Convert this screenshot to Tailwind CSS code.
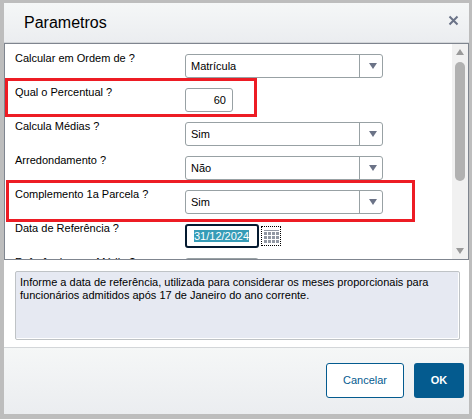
<!DOCTYPE html>
<html lang="pt-BR">
<head>
  <meta charset="UTF-8" />
  <meta name="viewport" content="width=device-width, initial-scale=1.0"/>
  <title>Parametros</title>
  <script src="https://cdn.jsdelivr.net/npm/@tailwindcss/browser@4"></script>
</head>
<body class="min-h-screen bg-[#bdbdbd] pt-[3px] pr-[3px] pb-[5px] pl-1 font-['Liberation_Sans',Arial,sans-serif] text-[11px] text-black">

  <main role="dialog" aria-labelledby="title" class="bg-white">

    <header class="flex h-10 items-center justify-between border-b border-[#d3d6d9] bg-linear-to-b from-[#f5f7f7] to-[#ebedf0] pr-[10px] pl-5">
      <h1 id="title" class="text-base">Parametros</h1>
      <button type="button" aria-label="Fechar" class="pb-1">
        <svg class="size-[11px]" viewBox="0 0 11 11" fill="none" stroke="#6b7387" stroke-width="2"><path d="M1.5 1.5l8 8M9.5 1.5l-8 8"/></svg>
      </button>
    </header>

    <!-- Parameter list -->
    <section class="relative flex h-[217px] overflow-hidden border border-[#7f858f]">
      <form id="params" class="flex flex-1 flex-col gap-[10px] pt-[10px] pl-[10px]">
        <div class="flex h-6 shrink-0">
          <label for="ordem" class="w-[170px] leading-2">Calcular em Ordem de ?</label>
          <div class="relative">
            <select id="ordem" class="h-6 w-[198px] appearance-none rounded-[3px] border border-[#98a1a4] bg-white pl-[5px]"><option>Matrícula</option></select>
            <span class="pointer-events-none absolute inset-y-0 right-0 flex w-6 items-center justify-center border-l border-[#98a1a4] pl-[3px]">
              <svg class="h-[6px] w-2" viewBox="0 0 8 6" fill="#6b7387"><path d="M0 0h8L4 6z"/></svg>
            </span>
          </div>
        </div>
        <div class="flex h-6 shrink-0">
          <label for="percentual" class="w-[170px] leading-2">Qual o Percentual ?</label>
          <input id="percentual" type="text" value="60" class="h-6 w-12 rounded-[3px] border border-[#98a1a4] px-[6px] text-right">
        </div>
        <div class="flex h-6 shrink-0">
          <label for="medias" class="w-[170px] leading-2">Calcula Médias ?</label>
          <div class="relative">
            <select id="medias" class="h-6 w-[198px] appearance-none rounded-[3px] border border-[#98a1a4] bg-white pl-[5px]"><option>Sim</option><option>Não</option></select>
            <span class="pointer-events-none absolute inset-y-0 right-0 flex w-6 items-center justify-center border-l border-[#98a1a4] pl-[3px]">
              <svg class="h-[6px] w-2" viewBox="0 0 8 6" fill="#6b7387"><path d="M0 0h8L4 6z"/></svg>
            </span>
          </div>
        </div>
        <div class="flex h-6 shrink-0">
          <label for="arredondamento" class="w-[170px] leading-2">Arredondamento ?</label>
          <div class="relative">
            <select id="arredondamento" class="h-6 w-[198px] appearance-none rounded-[3px] border border-[#98a1a4] bg-white pl-[5px]"><option>Não</option><option>Sim</option></select>
            <span class="pointer-events-none absolute inset-y-0 right-0 flex w-6 items-center justify-center border-l border-[#98a1a4] pl-[3px]">
              <svg class="h-[6px] w-2" viewBox="0 0 8 6" fill="#6b7387"><path d="M0 0h8L4 6z"/></svg>
            </span>
          </div>
        </div>
        <div class="flex h-6 shrink-0">
          <label for="complemento" class="w-[170px] leading-2">Complemento 1a Parcela ?</label>
          <div class="relative">
            <select id="complemento" class="h-6 w-[198px] appearance-none rounded-[3px] border border-[#98a1a4] bg-white pl-[5px]"><option>Sim</option><option>Não</option></select>
            <span class="pointer-events-none absolute inset-y-0 right-0 flex w-6 items-center justify-center border-l border-[#98a1a4] pl-[3px]">
              <svg class="h-[6px] w-2" viewBox="0 0 8 6" fill="#6b7387"><path d="M0 0h8L4 6z"/></svg>
            </span>
          </div>
        </div>
        <div class="flex h-6 shrink-0">
          <label for="data" class="w-[170px] leading-2">Data de Referência ?</label>
          <input id="data" type="text" value="31/12/2024" class="h-6 w-[74px] rounded-[3px] border-2 border-[#041a30] pl-[7px] outline-none selection:bg-[#369cb7] selection:text-white">
          <button type="button" aria-label="Calendário" class="ml-[2px] flex size-5 items-center justify-center self-center border border-dotted border-black">
            <svg class="h-[13px] w-[15px]" viewBox="0 0 15 13" fill="#9298a3" shape-rendering="crispEdges"><path d="M0 0h15v1H0zM0 2h3v3H0zM4 2h3v3H4zM8 2h3v3H8zM12 2h3v3h-3zM0 6h3v3H0zM4 6h3v3H4zM8 6h3v3H8zM12 6h3v3h-3zM0 10h3v3H0zM4 10h3v3H4zM8 10h3v3H8zM12 10h3v3h-3z"/></svg>
          </button>
        </div>
        <div class="flex h-6 shrink-0">
          <label for="refmedia" class="w-[170px] leading-2">Referência para Média ?</label>
          <input id="refmedia" type="text" class="h-6 w-[74px] rounded-[3px] border border-[#98a1a4]">
        </div>
      </form>

      <!-- Scrollbar -->
      <div class="flex w-4 flex-col items-center bg-[#f1f1f1] py-[5px]" aria-hidden="true">
        <svg class="h-[6px] w-2 shrink-0" viewBox="0 0 8 6" fill="#9a9a9a"><path d="M4 0l4 6H0z"/></svg>
        <div class="mt-[7px] h-[119px] w-[10px] rounded-full bg-[#b1b1b1]"></div>
        <svg class="mt-auto h-[6px] w-2 shrink-0" viewBox="0 0 8 6" fill="#9a9a9a"><path d="M0 0h8L4 6z"/></svg>
      </div>

      <!-- Highlight boxes over the list -->
      <div class="pointer-events-none absolute top-[34px] left-0 h-[39px] w-[252px] border-3 border-[#ed1c24]"></div>
      <div class="pointer-events-none absolute top-[136px] left-px h-[42px] w-[409px] border-3 border-[#ed1c24]"></div>
    </section>

    <div class="flex pt-[11px] pr-[9px] pb-[7px] pl-[11px]">
      <textarea readonly aria-label="Ajuda" class="h-[69px] flex-1 resize-none rounded-[2px] border border-[#bfc3c6] bg-[#e6e9f2] p-1 leading-[13px] shadow-[inset_-1px_-1px_0_#fff]">Informe a data de referência, utilizada para considerar os meses proporcionais para funcionários admitidos após 17 de Janeiro do ano corrente.</textarea>
    </div>

    <footer class="flex justify-end gap-[10px] border-t border-[#d3d6d9] bg-linear-to-b from-[#f5f7f7] to-[#ebedf0] pt-[15px] pr-[5px] pb-4">
      <button type="button" class="h-[35px] w-[78px] rounded-[3px] border border-[#045b8f] bg-white text-[#045b8f]">Cancelar</button>
      <button type="submit" form="params" class="h-[35px] w-[50px] rounded-[3px] bg-[#045b8f] font-bold text-white">OK</button>
    </footer>
  </main>

  <script>
    const dateInput = document.getElementById('data');
    dateInput.focus();
    dateInput.select();
  </script>

</body>
</html>
